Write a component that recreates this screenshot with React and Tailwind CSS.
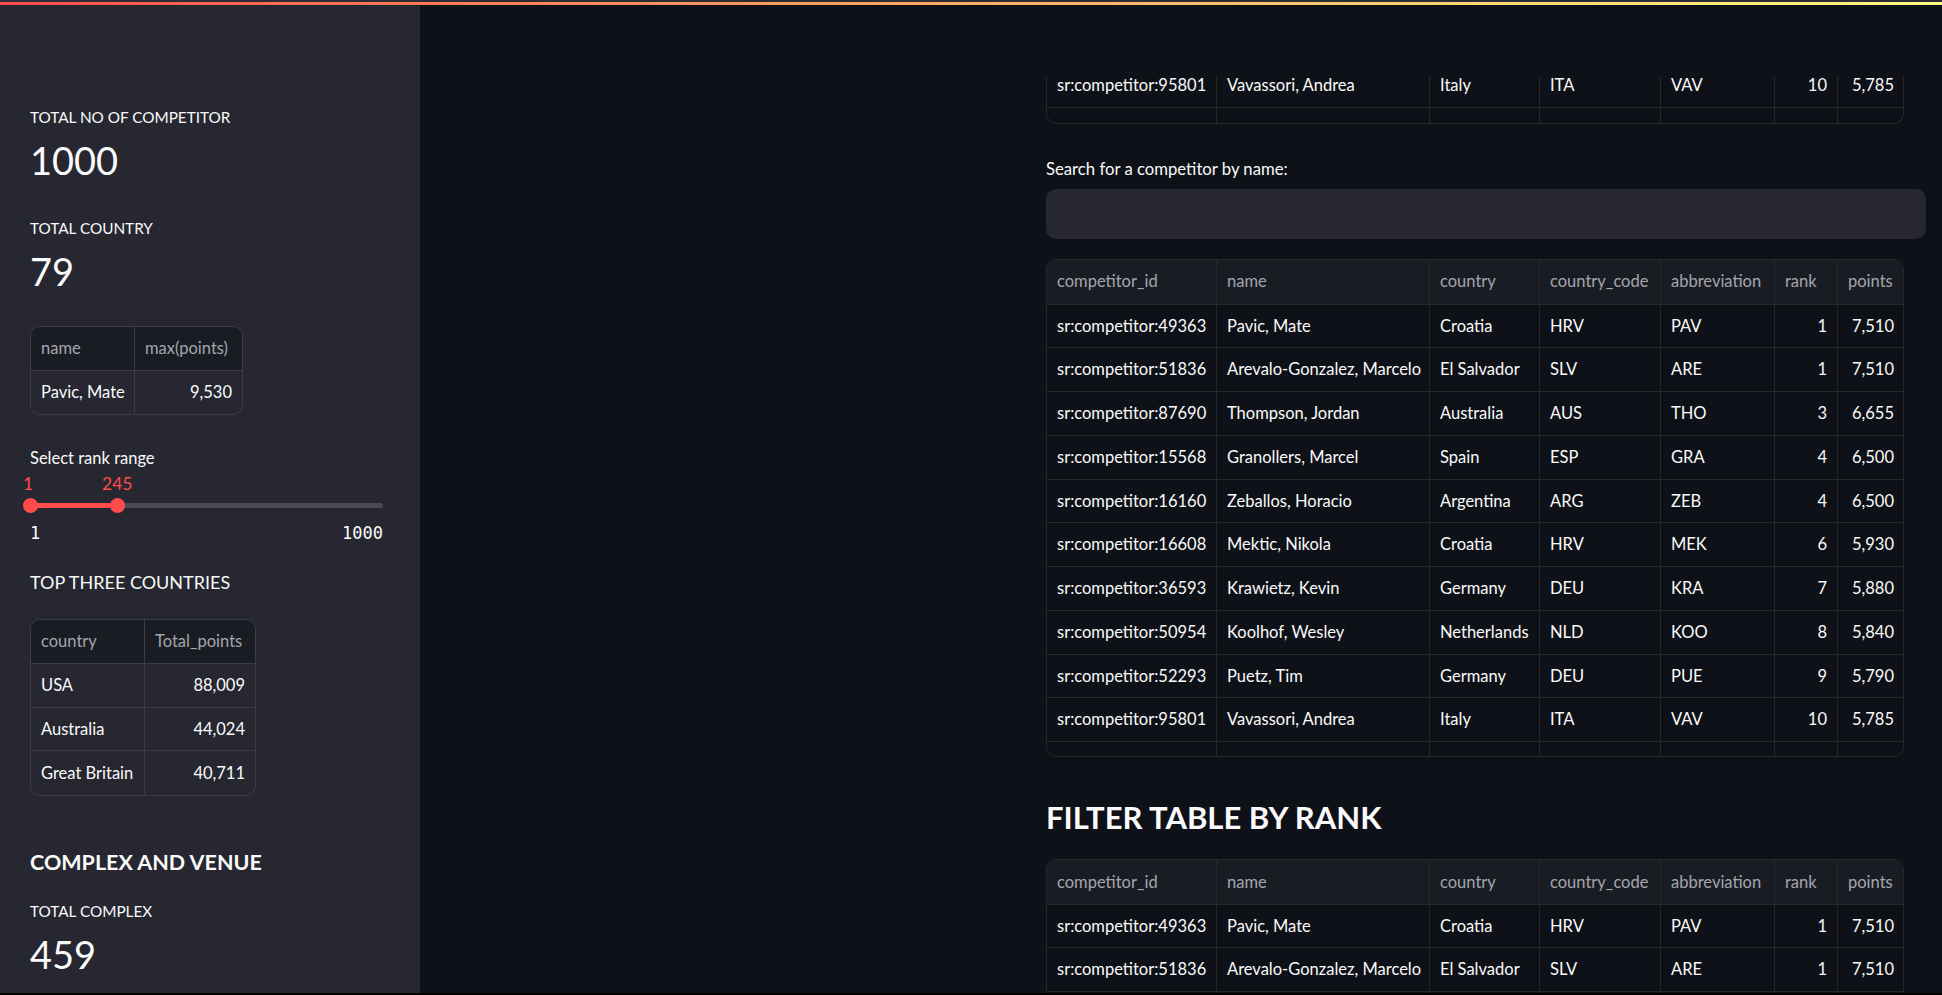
import React from 'react';

const COLS = [
    { key: 'id', label: 'competitor_id', w: 'w-[170px]' },
    { key: 'name', label: 'name', w: 'w-[213px]' },
    { key: 'country', label: 'country', w: 'w-[110px]' },
    { key: 'code', label: 'country_code', w: 'w-[121px]' },
    { key: 'abbr', label: 'abbreviation', w: 'w-[114px]' },
    { key: 'rank', label: 'rank', w: 'w-[63px]', num: true },
    { key: 'points', label: 'points', w: 'w-[66px]', num: true },
];

const ROWS = [
    ['sr:competitor:49363', 'Pavic, Mate', 'Croatia', 'HRV', 'PAV', '1', '7,510'],
    ['sr:competitor:51836', 'Arevalo-Gonzalez, Marcelo', 'El Salvador', 'SLV', 'ARE', '1', '7,510'],
    ['sr:competitor:87690', 'Thompson, Jordan', 'Australia', 'AUS', 'THO', '3', '6,655'],
    ['sr:competitor:15568', 'Granollers, Marcel', 'Spain', 'ESP', 'GRA', '4', '6,500'],
    ['sr:competitor:16160', 'Zeballos, Horacio', 'Argentina', 'ARG', 'ZEB', '4', '6,500'],
    ['sr:competitor:16608', 'Mektic, Nikola', 'Croatia', 'HRV', 'MEK', '6', '5,930'],
    ['sr:competitor:36593', 'Krawietz, Kevin', 'Germany', 'DEU', 'KRA', '7', '5,880'],
    ['sr:competitor:50954', 'Koolhof, Wesley', 'Netherlands', 'NLD', 'KOO', '8', '5,840'],
    ['sr:competitor:52293', 'Puetz, Tim', 'Germany', 'DEU', 'PUE', '9', '5,790'],
    ['sr:competitor:95801', 'Vavassori, Andrea', 'Italy', 'ITA', 'VAV', '10', '5,785'],
    ['sr:competitor:16720', 'Bolelli, Simone', 'Italy', 'ITA', 'BOL', '11', '5,785'],
];

function Row({ cells, header, low }) {
    return (
        <div className={`flex border-b border-[#26282e] shrink-0 ${header ? 'bg-[#1a1c24] h-[44.5px]' : 'h-[43.75px]'}`}>
            {COLS.map((c, i) => (
                <div
                    key={c.key}
                    className={`${c.w} shrink-0 flex items-center px-[10px] whitespace-nowrap overflow-hidden ${low ? 'pt-[10px]' : ''} ${i < COLS.length - 1 ? 'border-r border-[#26282e]' : ''} ${c.num && !header ? 'justify-end' : ''} ${header ? 'text-[#a3a6ae]' : 'text-[#fafafa]'}`}
                >
                    {cells[i]}
                </div>
            ))}
        </div>
    );
}

function CompetitorTable({ rows, height }) {
    return (
        <div className={`w-[858px] ${height} border border-[#26282e] rounded-[10px] overflow-hidden text-[16.5px]`}>
            <Row header cells={COLS.map((c) => c.label)} />
            {rows.map((r) => <Row key={r[0]} cells={r} />)}
        </div>
    );
}

function SideTable({ head, rows, widths }) {
    return (
        <div className="border border-[#3b3c45] rounded-[10px] overflow-hidden text-[16.5px] w-fit">
            <div className="flex h-[44px] bg-[#1a1c24] border-b border-[#3b3c45]">
                {head.map((h, i) => (
                    <div key={h} className={`${widths[i]} flex items-center px-[10px] text-[#a3a6ae] ${i === 0 ? 'border-r border-[#3b3c45]' : ''}`}>{h}</div>
                ))}
            </div>
            {rows.map((r, ri) => (
                <div key={r[0]} className={`flex h-[43.5px] ${ri < rows.length - 1 ? 'border-b border-[#3b3c45]' : ''}`}>
                    <div className={`${widths[0]} flex items-center px-[10px] border-r border-[#3b3c45] whitespace-nowrap`}>{r[0]}</div>
                    <div className={`${widths[1]} flex items-center justify-end px-[10px]`}>{r[1]}</div>
                </div>
            ))}
        </div>
    );
}

function Metric({ label, value, className }) {
    return (
        <div className={className}>
            <div className="text-[15.3px] leading-[1.2]">{label}</div>
            <div className="text-[38px] leading-[1.2] mt-[12px]">{value}</div>
        </div>
    );
}

function RankSlider() {
    return (
        <div className="w-[353px]">
            <div className="relative h-[21px] mt-[4px] text-[17.5px] leading-[1.2] text-[#ff4b4b]">
                <span className="absolute left-[-7px]">1</span>
                <span className="absolute left-[72px]">245</span>
            </div>
            <div className="relative h-[16px] mt-[3px] flex items-center">
                <div className="w-full h-[5px] rounded-full bg-[#4a4b55]"></div>
                <div className="absolute left-0 w-[87px] h-[5px] rounded-full bg-[#ff4b4b]"></div>
                <div className="absolute left-[-7px] w-[15px] h-[15px] rounded-full bg-[#ff4b4b]"></div>
                <div className="absolute left-[80px] w-[15px] h-[15px] rounded-full bg-[#ff4b4b]"></div>
            </div>
            <div className="flex justify-between mt-[10px] font-['DejaVu_Sans_Mono',monospace] text-[17px] leading-[1.2]">
                <span>1</span>
                <span>1000</span>
            </div>
        </div>
    );
}

export default function App() {
    return (
        <div className="relative h-screen overflow-hidden flex bg-[#0e1117] text-[#fafafa] font-['Lato','Noto_Sans',sans-serif]">
            <div className="absolute top-0 inset-x-0 h-[2px] bg-[#2b2c35] z-10"></div>
            <div className="absolute top-[2px] inset-x-0 h-[3px] bg-gradient-to-r from-[#ff4b4b] to-[#fffd80] z-10"></div>
            <div className="absolute bottom-0 inset-x-0 h-[2px] bg-black z-10"></div>

            {/* sidebar */}
            <aside className="w-[420px] shrink-0 bg-[#262730] pl-[30px] pt-[108px]">
                <Metric label="TOTAL NO OF COMPETITOR" value="1000" />
                <Metric className="mt-[35px]" label="TOTAL COUNTRY" value="79" />

                <div className="mt-[31px]">
                    <SideTable head={['name', 'max(points)']} rows={[['Pavic, Mate', '9,530']]} widths={['w-[104px]', 'w-[107px]']} />
                </div>

                <div className="mt-[34px] text-[16.5px] leading-[1.2]">Select rank range</div>
                <RankSlider />

                <div className="mt-[28.7px] text-[18px] leading-[1.2]">TOP THREE COUNTRIES</div>
                <div className="mt-[25.5px]">
                    <SideTable
                        head={['country', 'Total_points']}
                        rows={[['USA', '88,009'], ['Australia', '44,024'], ['Great Britain', '40,711']]}
                        widths={['w-[114px]', 'w-[110px]']}
                    />
                </div>

                <div className="mt-[54px] text-[21.5px] font-bold leading-[1.2]">COMPLEX AND VENUE</div>
                <Metric className="mt-[26px]" label="TOTAL COMPLEX" value="459" />
            </aside>

            {/* main */}
            <main className="flex-1 pt-[77px] pl-[626px]">
                <div className="w-[858px] h-[47px] border-x border-b border-[#26282e] rounded-b-[10px] overflow-hidden text-[16.5px]">
                    <div className="-mt-[13px]">
                        <Row cells={ROWS[9]} />
                        <Row low cells={ROWS[10]} />
                    </div>
                </div>

                <div className="mt-[35px] text-[16.7px] leading-[1.2]">Search for a competitor by name:</div>
                <div className="mt-[10px] w-[880px] h-[50px] rounded-[10px] bg-[#262730]"></div>

                <div className="mt-[20px]">
                    <CompetitorTable rows={ROWS} height="h-[498px]" />
                </div>

                <h3 className="mt-[42px] text-[31px] font-bold leading-[1.2]">FILTER TABLE BY RANK</h3>
                <div className="mt-[23px]">
                    <CompetitorTable rows={ROWS.slice(0, 4)} height="h-auto" />
                </div>
            </main>
        </div>
    );
}
